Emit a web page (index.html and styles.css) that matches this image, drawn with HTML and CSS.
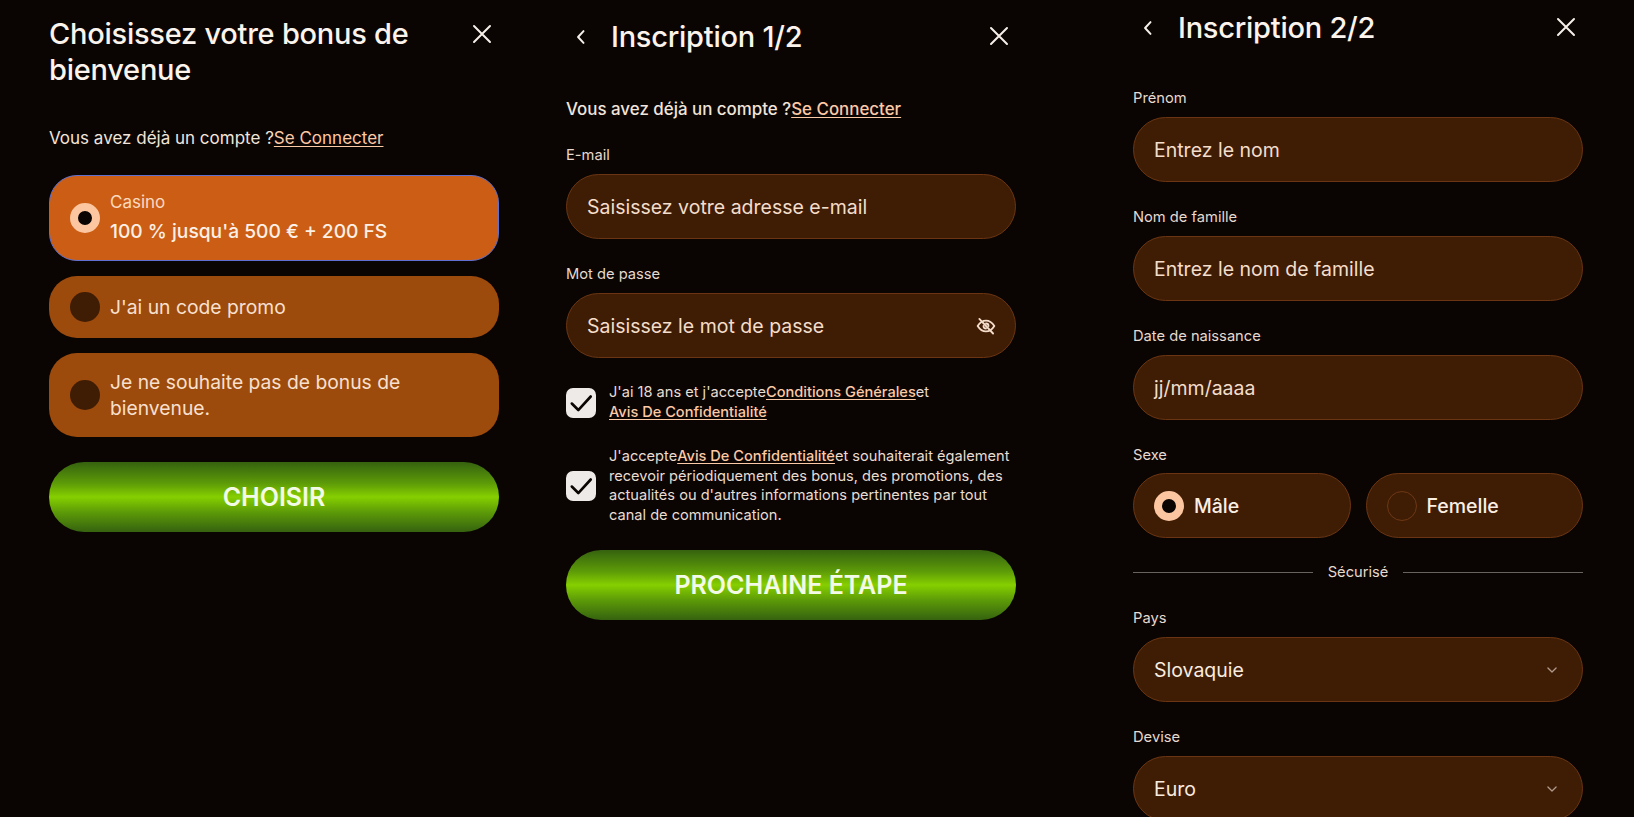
FILE: index.html
```html
<!DOCTYPE html>
<html lang="fr">
<head>
<meta charset="utf-8">
<title>Inscription</title>
<link rel="stylesheet" href="styles.css">
</head>
<body>
<svg class="defs" width="0" height="0" aria-hidden="true">
  <symbol id="close" viewBox="0 0 24 24"><path d="M4 4 20 20M20 4 4 20" fill="none" stroke="currentColor" stroke-width="2" stroke-linecap="round"/></symbol>
  <symbol id="back" viewBox="0 0 24 24"><path d="M15 5 8.500 12 15 19" fill="none" stroke="currentColor" stroke-width="2.400" stroke-linecap="round" stroke-linejoin="round"/></symbol>
  <symbol id="chev" viewBox="0 0 24 24"><path d="M5 8.500 12 15.500 19 8.500" fill="none" stroke="currentColor" stroke-width="2.200" stroke-linecap="round" stroke-linejoin="round"/></symbol>
  <symbol id="check" viewBox="0 0 24 24"><path d="M3.500 12.500 9.500 18.500 21 6" fill="none" stroke="currentColor" stroke-width="2.400" stroke-linecap="round" stroke-linejoin="round"/></symbol>
  <symbol id="eyeoff" viewBox="0 0 24 24"><g fill="none" stroke="currentColor" stroke-width="2.200" stroke-linecap="round" stroke-linejoin="round"><path d="M2 12c2.500-4 6-6.500 10-6.500s7.500 2.500 10 6.500c-2.500 4-6 6.500-10 6.500S4.500 16 2 12Z"/><path d="M9 12a3 3 0 0 0 3 3M15 12a3 3 0 0 0-3-3"/><path d="M4 3.500 20.500 21"/></g></symbol>
</svg>
<main class="page">
  <section class="panel panel-bonus">
    <header class="head">
      <h1 class="title">Choisissez votre bonus de bienvenue</h1>
      <svg class="ico-close"><use href="#close"/></svg>
    </header>
    <p class="login login-a">Vous avez déjà un compte ?<a class="link">Se Connecter</a></p>
    <div class="options">
      <div class="option option-on">
        <span class="radio radio-on"></span>
        <div class="option-text"><div class="option-sub">Casino</div><div class="option-main">100 % jusqu'à 500 € + 200 FS</div></div>
      </div>
      <div class="option option-short">
        <span class="radio radio-dark"></span>
        <div class="option-text">J'ai un code promo</div>
      </div>
      <div class="option option-long">
        <span class="radio radio-dark"></span>
        <div class="option-text">Je ne souhaite pas de bonus de bienvenue.</div>
      </div>
    </div>
    <button class="cta cta-a">CHOISIR</button>
  </section>

  <section class="panel panel-one">
    <header class="head head-step">
      <svg class="ico-back"><use href="#back"/></svg>
      <h1 class="title">Inscription 1/2</h1>
      <svg class="ico-close"><use href="#close"/></svg>
    </header>
    <p class="login login-b">Vous avez déjà un compte ?<a class="link">Se Connecter</a></p>
    <div class="fields">
      <div class="field"><div class="label">E-mail</div><div class="input">Saisissez votre adresse e-mail</div></div>
      <div class="field"><div class="label">Mot de passe</div><div class="input"><span>Saisissez le mot de passe</span><svg class="ico-eye"><use href="#eyeoff"/></svg></div></div>
    </div>
    <div class="consent consent-a">
      <span class="box"><svg class="ico-check"><use href="#check"/></svg></span>
      <p class="consent-text">J'ai 18 ans et j'accepte<a class="link link-strong">Conditions Générales</a>et<br><a class="link link-strong">Avis De Confidentialité</a></p>
    </div>
    <div class="consent consent-b">
      <span class="box"><svg class="ico-check"><use href="#check"/></svg></span>
      <p class="consent-text">J'accepte<a class="link link-strong">Avis De Confidentialité</a>et souhaiterait également recevoir périodiquement des bonus, des promotions, des actualités ou d'autres informations pertinentes par tout canal de communication.</p>
    </div>
    <button class="cta cta-b">PROCHAINE ÉTAPE</button>
  </section>

  <section class="panel panel-two">
    <header class="head head-step">
      <svg class="ico-back"><use href="#back"/></svg>
      <h1 class="title">Inscription 2/2</h1>
      <svg class="ico-close"><use href="#close"/></svg>
    </header>
    <div class="fields fields-two">
      <div class="field"><div class="label">Prénom</div><div class="input">Entrez le nom</div></div>
      <div class="field"><div class="label">Nom de famille</div><div class="input">Entrez le nom de famille</div></div>
      <div class="field"><div class="label">Date de naissance</div><div class="input">jj/mm/aaaa</div></div>
      <div class="field"><div class="label">Sexe</div>
        <div class="sex">
          <div class="input input-sex"><span class="radio radio-on"></span><span>Mâle</span></div>
          <div class="input input-sex"><span class="radio radio-off"></span><span>Femelle</span></div>
        </div>
      </div>
    </div>
    <div class="divider"><span>Sécurisé</span></div>
    <div class="fields">
      <div class="field"><div class="label">Pays</div><div class="input input-value"><span>Slovaquie</span><svg class="ico-chev"><use href="#chev"/></svg></div></div>
      <div class="field"><div class="label">Devise</div><div class="input input-value"><span>Euro</span><svg class="ico-chev"><use href="#chev"/></svg></div></div>
    </div>
  </section>
</main>
</body>
</html>
```
FILE: styles.css
```css
* { box-sizing: border-box; }
html, body { margin: 0; height: 817px; overflow: hidden; background: #0a0502; }
body { font-family: "Inter", "Noto Sans", sans-serif; color: #f6e9df; }
.defs { position: absolute; }
p, h1 { margin: 0; }
.page { display: flex; align-items: flex-start; padding-left: 49px; }
.panel { width: 450px; flex: none; }
.panel-bonus { padding-top: 16px; }
.panel-one { margin-left: 67px; padding-top: 19px; }
.panel-two { margin-left: 117px; padding-top: 10px; }

.head { display: flex; align-items: flex-start; }
.head-step { align-items: center; }
.title { flex: 1; font-size: 29px; line-height: 36px; font-weight: 500; color: #fbf3ec; padding-right: 40px; letter-spacing: -0.25px; }
.head-step .title { padding-right: 0; }
.ico-close { width: 24px; height: 24px; color: #f6efe9; margin: 6px 5px 0 0; flex: none; }
.head-step .ico-close { margin-top: -2px; }
.ico-back { width: 20px; height: 20px; margin: 0 20px 0 5px; color: #f6efe9; flex: none; }

.login { font-size: 17px; line-height: 22px; color: #f1e4da; }
.login-a { margin-top: 39px; }
.login-b { margin-top: 43px; font-size: 16.900px; font-weight: 500; }
.link { color: #fcc9a6; text-decoration: underline; text-underline-offset: 2px; text-decoration-thickness: 1px; }
.link-strong { font-weight: 500; }

.options { display: flex; flex-direction: column; gap: 15px; margin-top: 26px; }
.option { display: flex; align-items: center; gap: 10px; padding: 0 21px; border-radius: 28px; background: #9d4a0d; font-size: 19.300px; line-height: 26px; color: #f8e0cf; }
.option-on { height: 86px; background: #cb5e14; border: 1px solid #6070d0; padding: 0 20px; color: #fdf0e6; }
.option-short { height: 62px; }
.option-long { height: 84px; }
.option-text { flex: 1; }
.option-sub { font-size: 17px; line-height: 26px; color: #fbd9c0; }
.option-main { font-size: 19.200px; line-height: 32px; font-weight: 500; }

.radio { width: 30px; height: 30px; border-radius: 50%; flex: none; display: block; }
.radio-on { background: #0a0502; border: 8px solid #fcc6a0; }
.radio-dark { background: #3f1d05; }
.radio-off { border: 1px solid #6e3714; }

.cta { display: block; width: 100%; height: 70px; border: 0; border-radius: 35px; font: 600 25px/1 "Inter", sans-serif; color: #f3fbe6; background: linear-gradient(180deg, #35620f 0%, #5c9a08 30%, #86cf00 50%, #5c9a08 72%, #35620f 100%); }
.cta-a { margin-top: 25px; }
.cta-b { margin-top: 25px; }

.fields { display: flex; flex-direction: column; gap: 25px; margin-top: 25px; }
.fields-two { margin-top: 42px; }
.field { display: flex; flex-direction: column; gap: 9px; }
.label { font-size: 14.700px; line-height: 20px; color: #e6d9cf; }
.input { height: 65px; display: flex; align-items: center; justify-content: space-between; padding: 0 20px; border-radius: 33px; background: #3f1d05; border: 1px solid #6b3513; font-size: 19.500px; color: #f4ddcb; }
.input-value { color: #f9ebdf; }
.ico-eye { width: 20px; height: 20px; color: #f4ddcb; flex: none; margin-right: -1px; }
.ico-chev { width: 14px; height: 14px; color: #b09a8b; flex: none; margin-right: 3px; }
.sex { display: flex; gap: 15px; margin-top: -1px; }
.input-sex { flex: 1; justify-content: flex-start; gap: 10px; font-weight: 500; color: #fbeee3; }

.consent { display: flex; align-items: center; gap: 13px; }
.consent-a { margin-top: 25px; }
.consent-b { margin-top: 25px; }
.box { width: 30px; height: 30px; border-radius: 7px; background: #eeeae7; color: #0a0502; display: flex; align-items: center; justify-content: center; flex: none; }
.ico-check { width: 26px; height: 26px; }
.consent-text { font-size: 14.600px; line-height: 19.500px; color: #e9dcd2; }

.divider { display: flex; align-items: center; gap: 15px; margin-top: 22px; margin-bottom: -1px; font-size: 14.700px; line-height: 24px; color: #e6d9cf; }
.divider::before, .divider::after { content: ""; flex: 1; height: 1px; background: #6a625c; }
```
